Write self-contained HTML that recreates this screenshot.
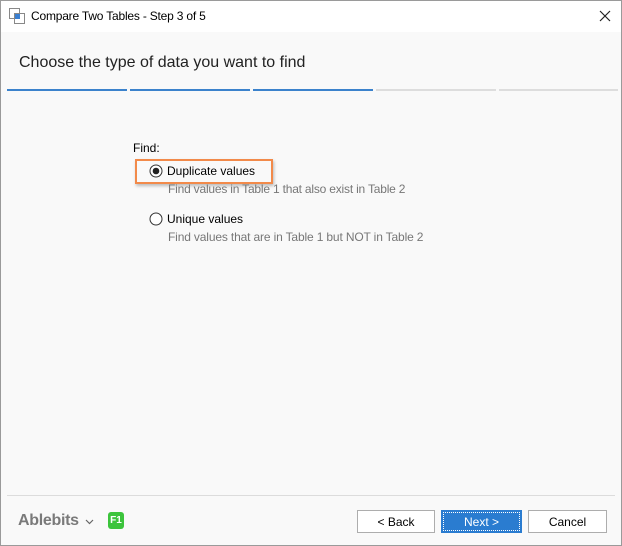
<!DOCTYPE html>
<html><head><style>
body{margin:0;width:622px;height:546px;overflow:hidden;font-family:"Liberation Sans",sans-serif;}
.win{position:absolute;left:0;top:0;width:620px;height:544px;border:1px solid #9a9a9a;background:#f9f9f9;}
.title{position:absolute;left:0;top:0;width:620px;height:31px;background:#fff;}
.t{position:absolute;font-size:12px;color:#000;white-space:nowrap;}
.seg{position:absolute;top:88px;height:2px;width:120px;}
.btn{position:absolute;top:509px;height:23px;border:1px solid #adadad;background:#fff;font-size:12px;text-align:center;line-height:23px;box-sizing:border-box;}
</style></head><body>
<div class="win">
<div class="title">
<svg style="position:absolute;left:8px;top:7px" width="16" height="16" viewBox="0 0 16 16"><rect x="0.5" y="0.5" width="10" height="10" fill="none" stroke="#888"/><rect x="5.5" y="5.5" width="10" height="10" fill="#fff" stroke="#888"/><rect x="6" y="6" width="5" height="5" fill="#3a7fd0"/></svg>
<div class="t" style="left:30px;top:8px;letter-spacing:-0.2px">Compare Two Tables - Step 3 of 5</div>
<svg style="position:absolute;left:598px;top:9px" width="12" height="12"><path d="M1 1L11 11M11 1L1 11" stroke="#222" stroke-width="1.2"/></svg>
</div>
<div class="t" style="left:18px;top:53px;font-size:16px;color:#222">Choose the type of data you want to find</div>
<div class="seg" style="left:6px;background:#3b82cc"></div>
<div class="seg" style="left:129px;background:#3b82cc"></div>
<div class="seg" style="left:252px;background:#3b82cc"></div>
<div class="seg" style="left:375px;background:#ddd"></div>
<div class="seg" style="left:498px;background:#ddd;width:119px"></div>
<div class="t" style="left:132px;top:140px">Find:</div>
<div style="position:absolute;left:134px;top:158px;width:138px;height:25px;border:2px solid #f28a4a;box-sizing:border-box;box-shadow:1px 2px 3px rgba(0,0,0,.25)"></div>
<svg style="position:absolute;left:148px;top:163px" width="14" height="14"><circle cx="7" cy="7" r="6" fill="#fff" stroke="#333"/><circle cx="7" cy="7" r="3.3" fill="#222"/></svg>
<div class="t" style="left:166px;top:163px">Duplicate values</div>
<div class="t" style="left:167px;top:181px;color:#777;letter-spacing:-0.2px">Find values in Table 1 that also exist in Table 2</div>
<svg style="position:absolute;left:148px;top:211px" width="14" height="14"><circle cx="7" cy="7" r="6" fill="#fff" stroke="#333"/></svg>
<div class="t" style="left:166px;top:211px">Unique values</div>
<div class="t" style="left:167px;top:229px;color:#777;letter-spacing:-0.15px">Find values that are in Table 1 but NOT in Table 2</div>
<div style="position:absolute;left:6px;top:494px;width:608px;height:1px;background:#dcdcdc"></div>
<div class="t" style="left:17px;top:511px;font-size:16px;font-weight:bold;color:#7a7a7a;letter-spacing:-0.3px">Ablebits</div>
<svg style="position:absolute;left:84px;top:518px" width="9" height="6"><path d="M1 1L4.5 4.5L8 1" stroke="#666" fill="none" stroke-width="1.2"/></svg>
<div style="position:absolute;left:107px;top:511px;width:16px;height:17px;background:#3cc43c;border-radius:3px;color:#fff;font-size:10px;font-weight:bold;text-align:center;line-height:17px">F1</div>
<div class="btn" style="left:356px;width:78px">&lt; Back</div>
<div class="btn" style="left:440px;width:81px;background:#2a7cd0;border-color:#2a7cd0;color:#fff;outline:1px dotted #fff;outline-offset:-3px">Next &gt;</div>
<div class="btn" style="left:527px;width:79px">Cancel</div>
</div>
</body></html>
